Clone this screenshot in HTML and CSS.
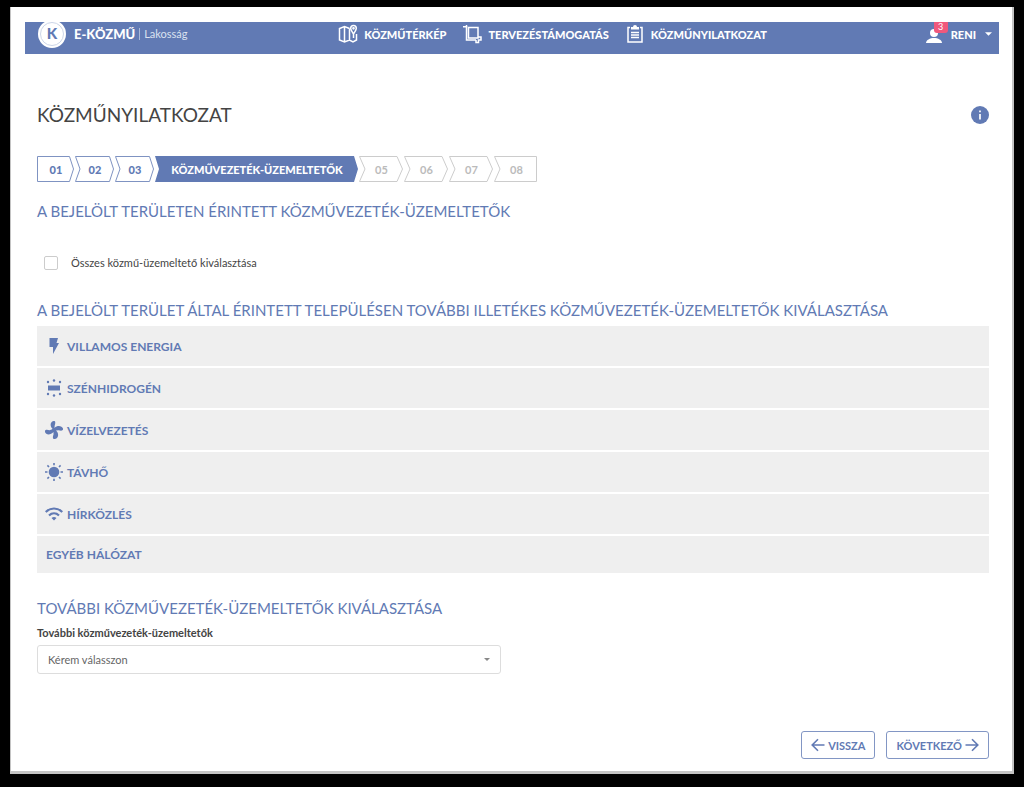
FILE: index.html
```html
<!DOCTYPE html>
<html lang="hu">
<head>
<meta charset="utf-8">
<meta name="viewport" content="width=device-width, initial-scale=1">
<title>E-közmű – Közműnyilatkozat</title>
<link rel="stylesheet" href="styles.css">
</head>
<body>
<div class="sheet">
  <header class="topbar">
    <a class="brand" href="#">
      <svg class="brand-logo" viewBox="0 0 28 28" aria-hidden="true">
        <circle cx="14" cy="14" r="14" fill="#fff"/>
        <circle cx="14" cy="14" r="11.500" fill="none" stroke="#ccd5e7" stroke-width="1"/>
        <text class="brand-letter" x="14" y="19" text-anchor="middle">K</text>
      </svg>
      <strong class="brand-name">E-KÖZMŰ</strong>
      <span class="brand-sub">Lakosság</span>
    </a>
    <nav class="mainnav">
      <a class="navlink" href="#">
        <svg class="navicon" viewBox="0 0 20 20" fill="none" stroke="#fff" stroke-width="1.500" aria-hidden="true">
          <path d="M11.500 4.500 6.500 2.500 1.500 4.500V16l5 2 5-2 3.500 2 3.500-2V10M6.500 2.500V18M11.500 4.500V16"/>
          <path d="M15.500 10C13.500 7 12.700 5.700 12.700 4.300a2.800 2.800 0 0 1 5.600 0c0 1.400-.8 2.700-2.800 5.700zM15.500 10v4"/>
          <circle cx="15.500" cy="4.300" r=".6"/>
        </svg>
        KÖZMŰTÉRKÉP
      </a>
      <a class="navlink" href="#">
        <svg class="navicon" viewBox="0 0 20 20" fill="none" stroke="#fff" stroke-width="1.500" aria-hidden="true">
          <path d="M1 2.700h3.500V16H14M6.500 3.500H16V14H6.500z"/>
          <path d="M4.500 1v2M16 13h3v3h-2.500v2.500H14V16"/>
        </svg>
        TERVEZÉSTÁMOGATÁS
      </a>
      <a class="navlink" href="#">
        <svg class="navicon" viewBox="0 0 20 20" aria-hidden="true">
          <path d="M5 3.500H3V18h14V3.500h-2" fill="none" stroke="#fff" stroke-width="1.500"/>
          <path d="M6 5.500V3h2a2 2 0 0 1 4 0h2v2.500z" fill="#fff"/>
          <path d="M6 8.500h8M6 11h8M6 13.500h8" stroke="#fff" stroke-width="1.700"/>
        </svg>
        KÖZMŰNYILATKOZAT
      </a>
    </nav>
    <button class="user" type="button">
      <span class="avatar">
        <svg class="person" viewBox="0 0 16 16" fill="#fff" aria-hidden="true">
          <circle cx="8" cy="5" r="4"/><path d="M0 15c0-3 4-5 8-5s8 2 8 5z"/>
        </svg>
        <span class="badge">3</span>
      </span>
      RENI
      <svg class="caret" viewBox="0 0 8 4" fill="#fff" aria-hidden="true"><path d="M0 0h8L4 4z"/></svg>
    </button>
  </header>

  <main class="content">
    <div class="titlebar">
      <h1 class="title">KÖZMŰNYILATKOZAT</h1>
      <button class="info" type="button" aria-label="Információ">
        <svg viewBox="0 0 18 18" aria-hidden="true">
          <circle cx="9" cy="9" r="9" fill="#617ab4"/>
          <path d="M9 4.500v1.800M9 8v5.500" stroke="#fff" stroke-width="1.700"/>
        </svg>
      </button>
    </div>

    <ol class="steps">
      <li class="step step-first"><svg class="outline" viewBox="0 0 38 26"><path d="M.5.500H32.500L36.500 13 32.500 25.500H.5z"/></svg><a href="#">01</a></li>
      <li class="step step-done"><svg class="outline" viewBox="0 0 40 26"><path d="M.5.500H34.500L38.500 13 34.500 25.500H.5L5 13z"/></svg><a href="#">02</a></li>
      <li class="step step-done"><svg class="outline" viewBox="0 0 40 26"><path d="M.5.500H34.500L38.500 13 34.500 25.500H.5L5 13z"/></svg><a href="#">03</a></li>
      <li class="step step-current" aria-current="step">KÖZMŰVEZETÉK-ÜZEMELTETŐK</li>
      <li class="step step-next"><svg class="outline" viewBox="0 0 45 26"><path d="M.5.500H38L43.500 13 38 25.500H.5L6 13z"/></svg><span>05</span></li>
      <li class="step step-next"><svg class="outline" viewBox="0 0 45 26"><path d="M.5.500H38L43.500 13 38 25.500H.5L6 13z"/></svg><span>06</span></li>
      <li class="step step-next"><svg class="outline" viewBox="0 0 45 26"><path d="M.5.500H38L43.500 13 38 25.500H.5L6 13z"/></svg><span>07</span></li>
      <li class="step step-next"><svg class="outline" viewBox="0 0 45 26"><path d="M.5.500H42.500V25.500H.5L6 13z"/></svg><span>08</span></li>
    </ol>

    <h2 class="subtitle">A BEJELÖLT TERÜLETEN ÉRINTETT KÖZMŰVEZETÉK-ÜZEMELTETŐK</h2>
    <label class="check"><input class="box" type="checkbox">Összes közmű-üzemeltető kiválasztása</label>

    <h2 class="subtitle">A BEJELÖLT TERÜLET ÁLTAL ÉRINTETT TELEPÜLÉSEN TOVÁBBI ILLETÉKES KÖZMŰVEZETÉK-ÜZEMELTETŐK KIVÁLASZTÁSA</h2>
    <div class="groups">
      <button class="group" type="button">
        <svg class="gicon" viewBox="0 0 18 18" aria-hidden="true"><path d="M4.500 1h8.500l-1.500 5H14L8 17V10H4.500z"/></svg>
        VILLAMOS ENERGIA
      </button>
      <button class="group" type="button">
        <svg class="gicon" viewBox="0 0 18 18" aria-hidden="true"><path d="M3 6.500h12v5H3z"/><circle cx="9" cy="1.500" r="1.200"/><circle cx="9" cy="16.500" r="1.200"/><circle cx="3" cy="3" r="1.200"/><circle cx="15" cy="3" r="1.200"/><circle cx="3" cy="15" r="1.200"/><circle cx="15" cy="15" r="1.200"/></svg>
        SZÉNHIDROGÉN
      </button>
      <button class="group" type="button">
        <svg class="gicon" viewBox="0 0 18 18" aria-hidden="true"><path d="M8 8C5 6.500 4.500 1 8.500 0c2.300-.5 2 2 1.200 4.500L9.500 7C12 4 17 4.500 18 7.500c.5 2.500-2 2.500-4.500 1.700L11 9.500c3 2.500 3 7.500-1 8.500-2.500.5-2.500-2-1.500-4.500V11C6 14 1 14.500 0 11c-.5-2.500 2-2.500 4.500-1.700z"/><circle cx="9" cy="9" r="2"/></svg>
        VÍZELVEZETÉS
      </button>
      <button class="group" type="button">
        <svg class="gicon" viewBox="0 0 18 18" aria-hidden="true"><circle cx="9" cy="9" r="5.300"/><path d="M9 0v2.200M9 15.800V18M0 9h2.500M15.500 9H18M2.400 2.400l1.600 1.600M14 14l1.600 1.600M15.600 2.400l-1.600 1.600M4 14l-1.600 1.600" stroke="#617ab4" stroke-width="1.600"/></svg>
        TÁVHŐ
      </button>
      <button class="group" type="button">
        <svg class="gicon" viewBox="0 0 18 18" aria-hidden="true"><path d="M.7 7C5.500 2.300 12.500 2.300 17.300 7M4 10.500c3-2.900 7-2.900 10 0" fill="none" stroke="#617ab4" stroke-width="2.200"/><path d="M6.500 13c1.600-1.300 3.400-1.300 5 0L9 15.600z"/></svg>
        HÍRKÖZLÉS
      </button>
      <button class="group group-plain" type="button">EGYÉB HÁLÓZAT</button>
    </div>

    <h2 class="subtitle">TOVÁBBI KÖZMŰVEZETÉK-ÜZEMELTETŐK KIVÁLASZTÁSA</h2>
    <div class="field">
      <label class="field-label" for="operators">További közművezeték-üzemeltetők</label>
      <div class="select-wrap">
        <select class="select" id="operators"><option>Kérem válasszon</option></select>
        <svg class="select-caret" viewBox="0 0 6 3" fill="#888" aria-hidden="true"><path d="M0 0h6L3 3z"/></svg>
      </div>
    </div>

    <div class="actions">
      <button class="btn" type="button">
        <svg class="arrow" viewBox="0 0 14 14" aria-hidden="true"><path d="M13.500 7H1.500M7 1.200 1.200 7 7 12.800"/></svg>
        VISSZA
      </button>
      <button class="btn" type="button">
        KÖVETKEZŐ
        <svg class="arrow" viewBox="0 0 14 14" aria-hidden="true"><path d="M.5 7h12M7 1.200 12.800 7 7 12.800"/></svg>
      </button>
    </div>
  </main>
</div>
</body>
</html>
```

FILE: styles.css
```css
* { box-sizing: border-box; }

body {
  margin: 0;
  min-height: 100vh;
  display: flex;
  padding: 7px 10px 13px;
  background: #000;
  color: #444;
  font-family: Lato, "Open Sans", sans-serif;
  font-size: 11px;
}

button, select, input { font: inherit; color: inherit; margin: 0; }
button { cursor: pointer; }
a { color: inherit; text-decoration: none; }
svg { display: block; }

.sheet {
  flex: 1;
  display: flex;
  flex-direction: column;
  padding: 15px 13px 12px 14px;
  background: #fff;
  border: solid #c4c4c4;
  border-width: 0 2px 3px 1px;
}

/* top navigation */
.topbar {
  display: grid;
  grid-template-columns: 4fr auto 3fr;
  align-items: start;
  height: 32px;
  padding: 0 7px 0 13px;
  overflow: hidden;
  background: #617ab4;
  color: #fff;
}
.brand { display: flex; align-items: center; height: 24px; }
.brand-logo { flex: none; width: 28px; height: 28px; margin-right: 8px; }
.brand-letter { fill: #617ab4; font-size: 15px; font-weight: 900; }
.brand-name { font-size: 13px; font-weight: 900; }
.brand-sub {
  margin-left: 4px;
  padding-left: 4px;
  border-left: 1px solid #a9b8d8;
  font-size: 11px;
  line-height: 12px;
  color: #dbe2f0;
}
.mainnav { display: flex; gap: 16px; height: 24px; }
.navlink {
  display: flex;
  align-items: center;
  gap: 6px;
  font-size: 11px;
  font-weight: 900;
  white-space: nowrap;
}
.navicon { width: 20px; height: 20px; }
.user {
  justify-self: end;
  display: flex;
  align-items: center;
  gap: 9px;
  height: 24px;
  padding: 0;
  border: 0;
  background: none;
  font-size: 11px;
  font-weight: 900;
}
.avatar { position: relative; padding-top: 4px; }
.person { width: 16px; height: 16px; }
.badge {
  position: absolute;
  top: -4px;
  left: 8px;
  width: 14px;
  height: 13px;
  border-radius: 3px;
  background: #f0587c;
  font-size: 9px;
  font-weight: 400;
  line-height: 13px;
}
.caret { width: 7px; height: 4px; }

/* page body */
.content {
  flex: 1;
  display: flex;
  flex-direction: column;
  padding: 48px 10px 0 12px;
}
.titlebar { display: flex; justify-content: space-between; align-items: center; }
.title { margin: 0; font-size: 19px; font-weight: 400; line-height: 26px; }
.info { width: 18px; height: 18px; padding: 0; border: 0; background: none; }

.steps {
  display: flex;
  margin: 28px 0 18px;
  padding: 0;
  list-style: none;
  font-size: 11px;
  font-weight: 900;
}
.step {
  position: relative;
  display: flex;
  align-items: center;
  justify-content: center;
  flex: none;
  width: 40px;
  height: 26px;
  color: #617ab4;
}
.step > a, .step > span { position: relative; }
.step-first { width: 38px; }
.step-current {
  width: 204px;
  background: #617ab4;
  color: #fff;
  clip-path: polygon(0 0, 199px 0, 203px 50%, 199px 100%, 0 100%, 4px 50%);
}
.step-next { width: 45px; color: #bbb; font-weight: 700; }
.outline { position: absolute; inset: 0; width: 100%; height: 100%; fill: none; stroke: #7f93c2; }
.step-next .outline { stroke: #ccc; }

.subtitle {
  margin: 0;
  font-size: 15px;
  font-weight: 400;
  line-height: 22px;
  color: #617ab4;
}

.check {
  display: flex;
  align-items: center;
  gap: 13px;
  margin: 34px 0 29px 7px;
  line-height: 14px;
}
.box {
  appearance: none;
  width: 14px;
  height: 14px;
  border: 1px solid #ccc;
  border-radius: 2px;
  background: #fff;
}

.groups { display: flex; flex-direction: column; gap: 2px; margin: 5px 0 24px; }
.group {
  display: flex;
  align-items: center;
  gap: 4px;
  height: 40px;
  padding: 0 8px;
  border: 0;
  background: #efefef;
  color: #617ab4;
  font-size: 12px;
  font-weight: 700;
  text-align: left;
}
.group-plain { height: 37px; padding-left: 9px; }
.gicon { width: 18px; height: 18px; fill: #617ab4; }

.field { width: calc(50% - 12px); margin-top: 6px; }
.field-label { display: block; font-weight: 700; line-height: 16px; }
.select-wrap { position: relative; margin-top: 4px; }
.select {
  appearance: none;
  display: block;
  width: 100%;
  height: 29px;
  padding: 0 10px;
  border: 1px solid #ddd;
  border-radius: 3px;
  background: #fff;
  color: #666;
}
.select-caret { position: absolute; top: 13px; right: 11px; width: 6px; height: 3px; }

.actions { display: flex; justify-content: flex-end; gap: 11px; margin-top: auto; }
.btn {
  display: flex;
  align-items: center;
  gap: 3px;
  height: 28px;
  padding: 0 9px;
  border: 1px solid #8296c4;
  border-radius: 3px;
  background: #fff;
  color: #617ab4;
  font-weight: 700;
}
.arrow { width: 14px; height: 14px; fill: none; stroke: #617ab4; stroke-width: 1.6; }
```
